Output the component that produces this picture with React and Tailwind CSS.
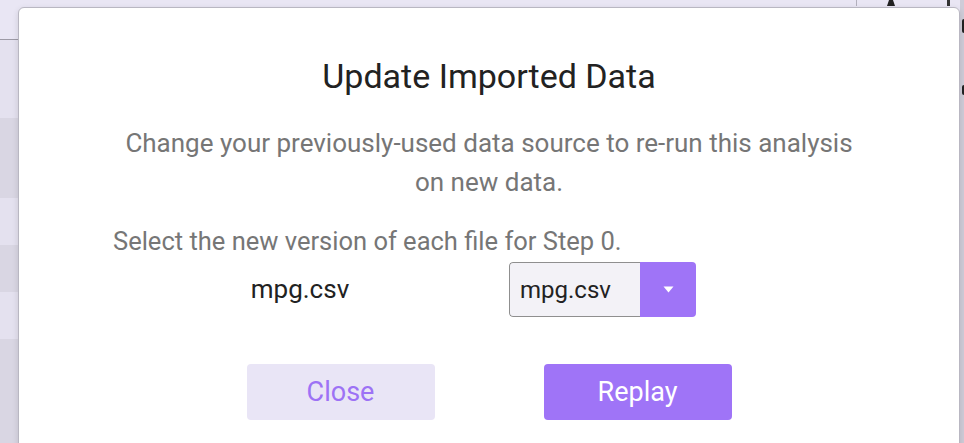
import React, { useState } from "react";

const FONT = { fontFamily: "Roboto, 'Noto Sans', sans-serif" };

export default function App() {
  const [file, setFile] = useState("mpg.csv");

  return (
    <div className="relative w-[964px] h-[443px] overflow-hidden bg-[#e9e6f4]" style={FONT}>
      {/* dimmed app behind the dialog */}
      <div className="absolute left-0 top-0 w-[18px] h-full flex flex-col">
        <div className="h-[40px] border-b border-[#9d9aa6]" />
        <div className="h-[78px] bg-[#e4e1ef]" />
        <div className="h-[80px] bg-[#d9d6e3]" />
        <div className="h-[47px] bg-[#e4e1ef]" />
        <div className="h-[47px] bg-[#d9d6e3]" />
        <div className="h-[47px] bg-[#e4e1ef]" />
        <div className="flex-1 bg-[#d9d6e3]" />
      </div>
      <div className="absolute left-[856px] top-0 w-px h-[6px] bg-[#b3b0bd]" />
      <svg className="absolute left-[886px] top-0" width="10" height="6" viewBox="0 0 10 6">
        <path d="M3 0h4l2 6H1z" fill="#222222" />
      </svg>
      <div className="absolute left-[947px] top-0 w-[3px] h-[6px] bg-[#333]" />
      <div className="absolute right-0 top-0 w-[4px] h-full bg-[#cfccd8]" />
      <div className="absolute right-0 top-[19px] w-[2px] h-[14px] bg-[#222] rounded-l" />
      <div className="absolute right-0 top-[85px] w-[2px] h-[10px] bg-[#222] rounded-l" />

      {/* dialog */}
      <div className="absolute left-[18px] top-[7px] w-[942px] h-[460px] bg-white border border-[#b9b7c2] rounded-[6px] shadow-[0_2px_6px_rgba(0,0,0,0.12)]">
        <div className="w-[752px] mx-auto pt-[48px] flex flex-col">
          <h2 className="text-center text-[34px] leading-[40px] text-[#222222] font-normal">
            Update Imported Data
          </h2>
          <p className="mt-[28px] text-center text-[26px] leading-[39px] text-[#767676]">
            Change your previously-used data source to re-run this analysis on new data.
          </p>
          <p className="mt-[23px] text-[25.5px] leading-[32px] text-[#767676]">
            Select the new version of each file for Step 0.
          </p>
          <div className="mt-[5px] grid grid-cols-[396px_187px] items-center">
            <div className="text-center text-[26px] text-[#222222] pr-[22px]">mpg.csv</div>
            <div className="flex h-[55px] rounded-[4px] overflow-hidden">
              <div className="flex-1 flex items-center pl-[10px] bg-[#f3f2f7] border border-[#8f8f8f] border-r-0 rounded-l-[4px] text-[24px] text-[#222222]">
                {file}
              </div>
              <button
                onClick={() => setFile("mpg.csv")}
                className="w-[56px] bg-[#9f74f7] flex items-center justify-center"
              >
                <svg width="11" height="7" viewBox="0 0 11 7">
                  <path d="M0.5 0.5h10L5.5 6.5z" fill="#ffffff" />
                </svg>
              </button>
            </div>
          </div>
          <div className="mt-[47px] flex justify-center gap-[109px]">
            <button className="w-[188px] h-[56px] rounded-[4px] bg-[#e9e5f6] text-[#9d72f5] text-[27px]">
              Close
            </button>
            <button className="w-[188px] h-[56px] rounded-[4px] bg-[#9f74f7] text-white text-[27px]">
              Replay
            </button>
          </div>
        </div>
      </div>
    </div>
  );
}
